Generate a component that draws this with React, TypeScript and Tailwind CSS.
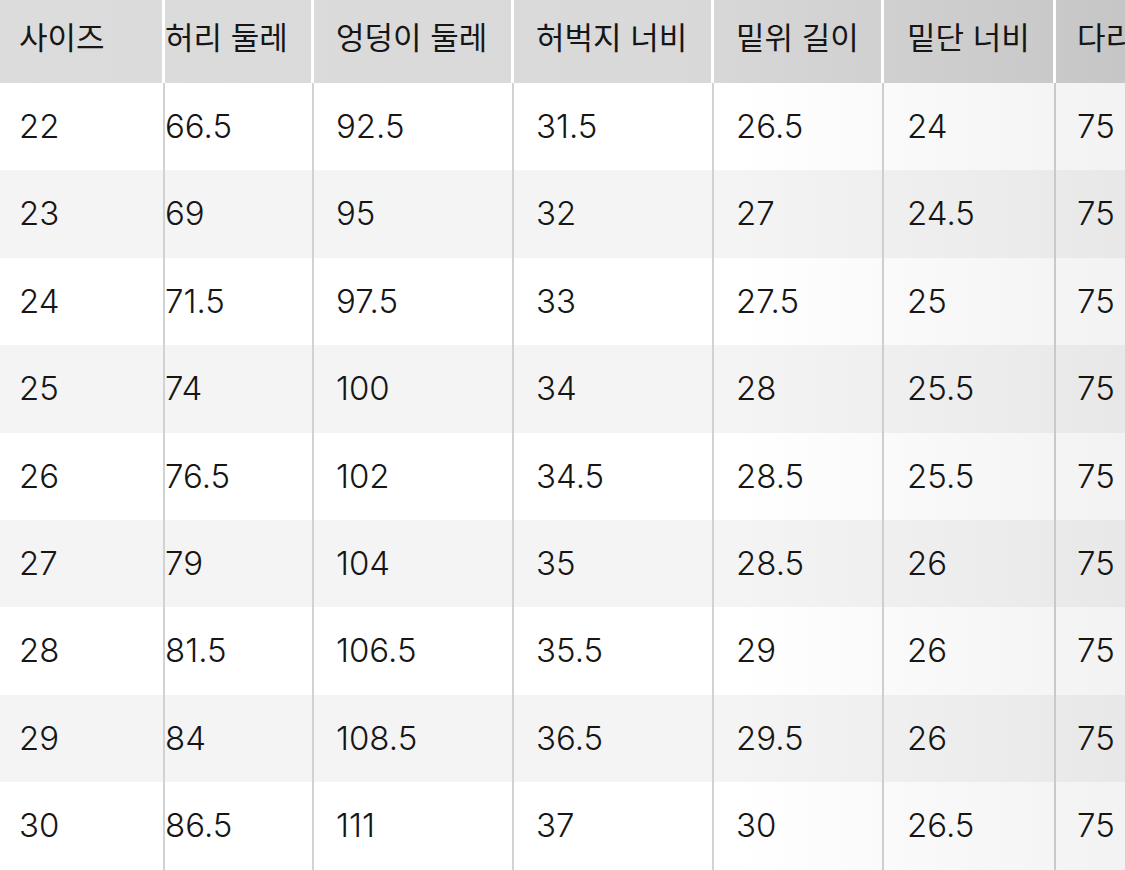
const headers = ['사이즈', '허리 둘레', '엉덩이 둘레', '허벅지 너비', '밑위 길이', '밑단 너비', '다리 길이']

const rows = [
  ['22', '66.5', '92.5', '31.5', '26.5', '24', '75'],
  ['23', '69', '95', '32', '27', '24.5', '75'],
  ['24', '71.5', '97.5', '33', '27.5', '25', '75'],
  ['25', '74', '100', '34', '28', '25.5', '75'],
  ['26', '76.5', '102', '34.5', '28.5', '25.5', '75'],
  ['27', '79', '104', '35', '28.5', '26', '75'],
  ['28', '81.5', '106.5', '35.5', '29', '26', '75'],
  ['29', '84', '108.5', '36.5', '29.5', '26', '75'],
  ['30', '86.5', '111', '37', '30', '26.5', '75'],
]

const cols = 'grid grid-cols-[165px_149px_200px_200px_170px_172px_200px]'
const pad = ['pl-[19px]', 'pl-0', 'pl-[22px]', 'pl-[22px]', 'pl-[22px]', 'pl-[23px]', 'pl-[21px]']

export default function App() {
  return (
    <div
      className="w-[1125px] h-[870px] overflow-hidden bg-white text-[#161616]"
      style={{ fontFamily: 'Inter, "Noto Sans CJK KR", sans-serif' }}
    >
      {/* Header */}
      <div className={`${cols} h-[83px] bg-linear-to-r from-[#dcdcdc] via-[#d9d9d9] via-60% to-[#c6c6c6]`}>
        {headers.map((h, i) => (
          <div
            key={h}
            className={`flex items-center whitespace-nowrap overflow-hidden border-r-[3px] border-white pb-[7px] text-[31px] ${pad[i]}`}
          >
            {h}
          </div>
        ))}
      </div>

      {/* Body */}
      <div className="relative">
        {rows.map((r, ri) => (
          <div
            key={r[0]}
            className={`${cols} h-[87.4px] ${ri % 2 === 0 ? 'bg-white' : 'bg-[#f4f4f4]'}`}
          >
            {r.map((v, i) => (
              <div
                key={i}
                className={`flex items-center border-r-2 border-[#d2d2d2] text-[33px] font-light ${pad[i]}`}
              >
                {v}
              </div>
            ))}
          </div>
        ))}
        <div className="pointer-events-none absolute inset-0 bg-linear-to-r from-transparent from-65% to-black/[0.05]" />
      </div>
    </div>
  )
}
